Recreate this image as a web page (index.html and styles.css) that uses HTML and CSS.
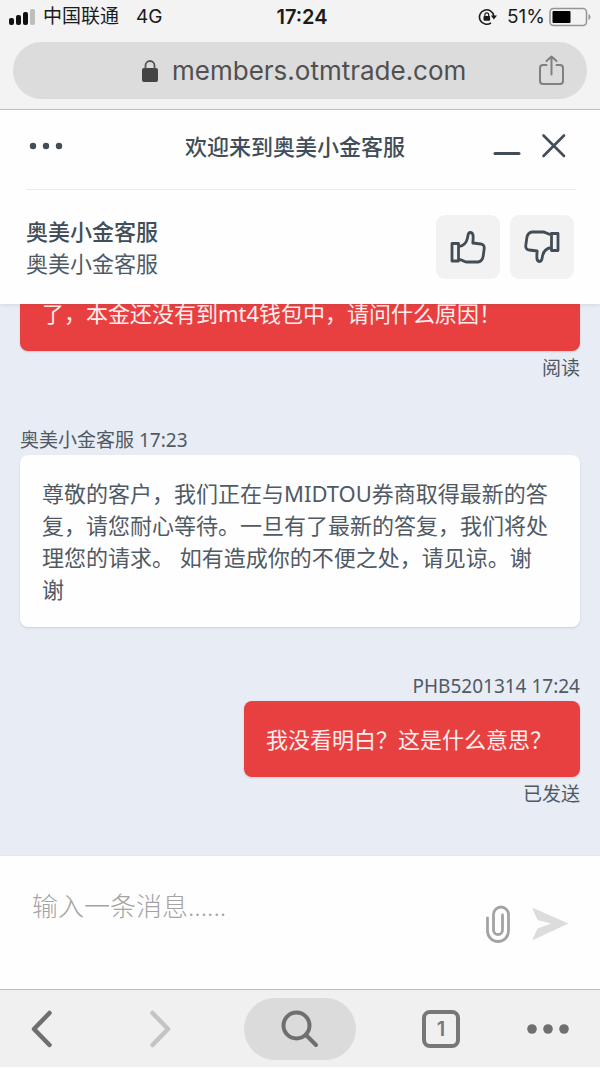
FILE: index.html
```html
<!DOCTYPE html>
<html lang="zh-CN">
<head>
<meta charset="utf-8">
<meta name="viewport" content="width=device-width, initial-scale=1">
<title>奥美小金客服</title>
<link rel="stylesheet" href="styles.css">
</head>
<body>
<div class="screen">
  <div class="browser-top">
    <div class="status-bar">
      <div class="status-left">
        <svg width="28" height="18" viewBox="0 0 28 18" aria-hidden="true">
          <rect x="0" y="10" width="5" height="7" rx="2" fill="#111"/>
          <rect x="7" y="7" width="5" height="10" rx="2" fill="#111"/>
          <rect x="14" y="4" width="5" height="13" rx="2" fill="#111"/>
          <rect x="21" y="1" width="5" height="16" rx="2" fill="#bdbdbd"/>
        </svg>
        <span class="carrier">中国联通</span>
        <span class="network">4G</span>
      </div>
      <span class="clock">17:24</span>
      <div class="status-right">
        <svg width="20" height="18" viewBox="0 0 20 18" fill="none" stroke="#1b1b1b" aria-hidden="true">
          <path d="M15.800 8A7.200 7.200 0 1 0 13 14.800" stroke-width="1.600"/>
          <path d="M12.800 7.600h6.200l-3.100 4z" fill="#1b1b1b" stroke="none"/>
          <rect x="5.500" y="8" width="6.600" height="4.800" rx="1" fill="#1b1b1b" stroke="none"/>
          <path d="M6.900 8.400V6.700a1.900 1.900 0 0 1 3.800 0v1.700" stroke-width="1.200"/>
        </svg>
        <span class="percent">51%</span>
        <svg width="42" height="20" viewBox="0 0 42 20" aria-hidden="true">
          <rect x="1" y="1.500" width="36.500" height="17" rx="3.500" fill="none" stroke="#959595" stroke-width="1.500"/>
          <rect x="3.500" y="4" width="18" height="12" rx="1" fill="#000"/>
          <path d="M39.500 7c2.600 1 2.600 5 0 6z" fill="#959595"/>
        </svg>
      </div>
    </div>
    <div class="address-bar">
      <svg width="18" height="24" viewBox="0 0 18 24" aria-hidden="true">
        <rect x="1" y="9" width="16" height="14" rx="2" fill="#444"/>
        <path d="M4.500 10V6.500a4.500 4.500 0 0 1 9 0V10" fill="none" stroke="#555" stroke-width="1.800"/>
      </svg>
      <span class="url">members.otmtrade.com</span>
      <button class="icon-button share" type="button" aria-label="Share">
        <svg width="26" height="32" viewBox="0 0 26 32" fill="none" stroke="#808080" stroke-width="2" stroke-linecap="round" stroke-linejoin="round">
          <path d="M7.500 10H4a3 3 0 0 0-3 3v13a3 3 0 0 0 3 3h17a3 3 0 0 0 3-3V13a3 3 0 0 0-3-3h-3.500M12.500 19.500V1.500M7.500 6l5-4.500 5 4.500"/>
        </svg>
      </button>
    </div>
  </div>

  <header class="chat-header">
    <div class="title-row">
      <button class="icon-button" type="button" aria-label="Menu">
        <svg width="34" height="8" viewBox="0 0 34 8" fill="#424d57"><circle cx="4" cy="4" r="3.200"/><circle cx="17" cy="4" r="3.200"/><circle cx="30" cy="4" r="3.200"/></svg>
      </button>
      <h1 class="title">欢迎来到奥美小金客服</h1>
      <div class="window-actions">
        <button class="icon-button" type="button" aria-label="Minimize">
          <svg width="28" height="26" viewBox="0 0 28 26" stroke="#424d57" stroke-width="3" stroke-linecap="round"><path d="M2 20.500h24"/></svg>
        </button>
        <button class="icon-button" type="button" aria-label="Close">
          <svg width="26" height="26" viewBox="0 0 26 26" stroke="#424d57" stroke-width="2.600" stroke-linecap="round"><path d="M2.500 2.500l20.500 20.500M23 2.500L2.500 23"/></svg>
        </button>
      </div>
    </div>
    <div class="agent-row">
      <div class="agent">
        <strong class="agent-name">奥美小金客服</strong>
        <span class="agent-role">奥美小金客服</span>
      </div>
      <div class="ratings">
        <button class="rate" type="button" aria-label="Good">
          <svg width="36" height="34" viewBox="0 0 36 34" fill="none" stroke="#424d57" stroke-width="2.800" stroke-linejoin="round">
            <path d="M2 13.500h6.500v17.500H2zM8.500 16.500c4.500-.5 8-3.500 9-8.500.5-2.500.3-5.500 2.700-5.500 3.300 0 3.300 3.500 2.600 10.500l8 1c2.700.3 3.700 2.300 3.400 4.600l-1 7.400c-.5 3.500-2 5.500-5.200 6l-11 0c-3 0-4-2.500-8.500-2.500"/>
          </svg>
        </button>
        <button class="rate" type="button" aria-label="Bad">
          <svg width="36" height="34" viewBox="0 0 36 34" fill="none" stroke="#424d57" stroke-width="2.800" stroke-linejoin="round">
            <path d="M34 20.500h-6.500V3.500H34zM27.500 17.500c-4.500.5-8 3.500-9 8.500-.5 2.500-.3 5.500-2.700 5.500-3.300 0-3.300-3.500-2.600-10.500l-8-1c-2.700-.3-3.700-2.300-3.400-4.600l1-7.400c.5-3.500 2-5.500 5.200-6h11c3 0 4 2.500 8.500 2.500"/>
          </svg>
        </button>
      </div>
    </div>
  </header>

  <main class="messages">
    <article class="message own">
      <p class="bubble wide">了，本金还没有到mt4钱包中，请问什么原因！</p>
      <span class="state">阅读</span>
    </article>
    <article class="message">
      <span class="meta">奥美小金客服 17:23</span>
      <p class="bubble wide">尊敬的客户，我们正在与MIDTOU券商取得最新的答复，请您耐心等待。一旦有了最新的答复，我们将处理您的请求。 如有造成你的不便之处，请见谅。谢谢</p>
    </article>
    <article class="message own">
      <span class="meta">PHB5201314 17:24</span>
      <p class="bubble">我没看明白？这是什么意思？</p>
      <span class="state">已发送</span>
    </article>
  </main>

  <form class="composer">
    <textarea class="message-input" rows="1" placeholder="输入一条消息......" aria-label="输入一条消息"></textarea>
    <button class="icon-button" type="button" aria-label="Attach">
      <svg width="24" height="38" viewBox="0 0 24 38" fill="none" stroke="#a3a3a3" stroke-width="2.800" stroke-linecap="round">
        <path d="M1.500 13v13a10.500 10.500 0 0 0 21 0V9.500a7.500 7.500 0 0 0-15 0V25a4.500 4.500 0 0 0 9 0V10"/>
      </svg>
    </button>
    <button class="icon-button" type="submit" aria-label="Send">
      <svg width="38" height="34" viewBox="0 0 38 34" fill="#dcdcdc"><path d="M1 .5L37.500 16.500 1 33.500l5.500-12L20 16.500 6.500 13z"/></svg>
    </button>
  </form>

  <nav class="browser-nav">
    <div class="nav-group history">
      <button class="icon-button" type="button" aria-label="Back">
        <svg width="22" height="38" viewBox="0 0 22 38" fill="none" stroke="#6f6f6f" stroke-width="4.500" stroke-linecap="round" stroke-linejoin="round"><path d="M18.500 3L3 19l15.500 16"/></svg>
      </button>
      <button class="icon-button" type="button" aria-label="Forward">
        <svg width="22" height="38" viewBox="0 0 22 38" fill="none" stroke="#c4c4c4" stroke-width="4.500" stroke-linecap="round" stroke-linejoin="round"><path d="M3.500 3L19 19 3.500 35"/></svg>
      </button>
    </div>
    <button class="icon-button search" type="button" aria-label="Search">
      <svg width="38" height="38" viewBox="0 0 38 38" fill="none" stroke="#6f6f6f" stroke-width="4" stroke-linecap="round"><circle cx="15.500" cy="15.500" r="13"/><path d="M25 25L35 35"/></svg>
    </button>
    <div class="nav-group">
      <button class="icon-button" type="button" aria-label="Tabs"><span class="tab-count">1</span></button>
      <button class="icon-button" type="button" aria-label="More">
        <svg width="42" height="10" viewBox="0 0 42 10" fill="#6f6f6f"><circle cx="5" cy="5" r="4.800"/><circle cx="21" cy="5" r="4.800"/><circle cx="37" cy="5" r="4.800"/></svg>
      </button>
    </div>
  </nav>
</div>
</body>
</html>
```

FILE: styles.css
```css
* {
  box-sizing: border-box;
}

body {
  margin: 0;
  font-family: "Noto Sans", "Noto Sans CJK SC", sans-serif;
  color: #505a64;
  background: #fefefe;
}

.screen {
  display: flex;
  flex-direction: column;
  height: 100vh;
}

svg {
  display: block;
  flex: none;
}

.icon-button {
  display: flex;
  align-items: center;
  justify-content: center;
  padding: 0;
  border: 0;
  background: none;
  color: inherit;
  font: inherit;
}

/* Browser chrome */

.browser-top {
  flex: none;
  padding: 2px 13px 10px;
  background: #f3f3f3;
  border-bottom: 1px solid #c4c4c4;
}

.status-bar {
  display: grid;
  grid-template-columns: 1fr auto 1fr;
  align-items: center;
  height: 30px;
  margin: 0 -4px 10px;
  color: #1b1b1b;
  font-family: Inter, "Noto Sans CJK SC", sans-serif;
  font-size: 19px;
  line-height: 30px;
}

.status-left,
.status-right {
  display: flex;
  align-items: center;
}

.carrier {
  margin-left: 6px;
}

.network {
  margin-left: 17px;
}

.clock {
  padding-left: 4px;
  font-size: 20px;
  font-weight: 600;
}

.status-right {
  justify-content: flex-end;
}

.percent {
  margin: 0 4px 0 9px;
}

.address-bar {
  display: flex;
  align-items: center;
  height: 57px;
  padding: 0 22px 0 128px;
  border-radius: 29px;
  background: #dcdcdc;
}

.url {
  margin-left: 13px;
  color: #505050;
  font-family: Inter, sans-serif;
  font-size: 26px;
}

.share {
  margin-left: auto;
}

/* Chat header */

.chat-header {
  position: relative;
  flex: none;
  padding: 0 24px 0 26px;
  background: #fefefe;
  box-shadow: 0 1px 4px rgba(60, 70, 90, 0.12);
}

.title-row {
  display: grid;
  grid-template-columns: 1fr auto 1fr;
  align-items: center;
  height: 80px;
  padding: 0 9px 8px 3px;
  border-bottom: 1px solid #ececee;
}

.title-row > .icon-button {
  justify-self: start;
}

.title {
  margin: 0;
  padding-right: 6px;
  color: #424d57;
  font-size: 22px;
  font-weight: 500;
  line-height: 32px;
}

.window-actions {
  display: flex;
  justify-content: flex-end;
  gap: 20px;
}

.agent-row {
  display: flex;
  align-items: center;
  justify-content: space-between;
  padding: 25px 2px 25px 0;
}

.agent {
  display: flex;
  flex-direction: column;
  font-size: 22px;
  line-height: 32px;
}

.agent-name {
  color: #424d57;
  font-weight: 500;
}

.ratings {
  display: flex;
  gap: 10px;
}

.rate {
  display: flex;
  align-items: center;
  justify-content: center;
  width: 64px;
  height: 64px;
  padding: 0;
  border: 0;
  border-radius: 9px;
  background: #f2f2f2;
}

/* Conversation */

.messages {
  display: flex;
  flex: 1;
  flex-direction: column;
  justify-content: flex-end;
  gap: 46px;
  min-height: 0;
  padding: 0 20px 48px;
  overflow: hidden;
  background: #e8ecf5;
}

.message {
  display: flex;
  flex-direction: column;
  align-items: flex-start;
}

.own {
  align-items: flex-end;
}

.meta,
.state {
  font-size: 19px;
  line-height: 26px;
}

.meta {
  margin-bottom: 2px;
}

.state {
  margin-top: 4px;
}

.bubble {
  margin: 0;
  padding: 22px 28px 22px 22px;
  border-radius: 8px;
  background: #fefefe;
  box-shadow: 0 1px 2px rgba(60, 70, 90, 0.18);
  font-size: 22px;
  line-height: 32px;
}

.own .bubble {
  background: #e84040;
  color: #fdeeee;
}

.wide {
  align-self: stretch;
}

/* Composer */

.composer {
  display: flex;
  flex: none;
  align-items: center;
  padding: 33px 31px 46px 32px;
  border-top: 1px solid #e6e6ea;
  background: #fefefe;
}

.message-input {
  flex: 1;
  min-width: 0;
  height: 52px;
  margin-right: 20px;
  padding: 0;
  border: 0;
  outline: 0;
  resize: none;
  overflow: hidden;
  background: none;
  color: inherit;
  font-family: inherit;
  font-size: 26px;
  line-height: 32px;
}

.message-input::placeholder {
  color: #a4a4a4;
  font-weight: 300;
}

.composer .icon-button {
  margin: 16px 0 0;
}

.composer .icon-button + .icon-button {
  margin-left: 21px;
}

/* Bottom toolbar */

.browser-nav {
  display: grid;
  grid-template-columns: 1fr 112px 1fr;
  flex: none;
  gap: 66px;
  align-items: center;
  padding: 8px 31px 7px;
  border-top: 1px solid #bdbdbd;
  border-bottom: 1px solid #fefefe;
  background: #f0f0f0;
}

.nav-group {
  display: flex;
  align-items: center;
  justify-content: space-between;
}

.history {
  padding-right: 7px;
}

.search {
  height: 62px;
  border-radius: 31px;
  background: #dbdbdb;
}

.tab-count {
  width: 38px;
  height: 38px;
  border: 4px solid #777;
  border-radius: 8px;
  color: #777;
  font-family: Inter, sans-serif;
  font-size: 20px;
  font-weight: 600;
  line-height: 30px;
  text-align: center;
}
```
